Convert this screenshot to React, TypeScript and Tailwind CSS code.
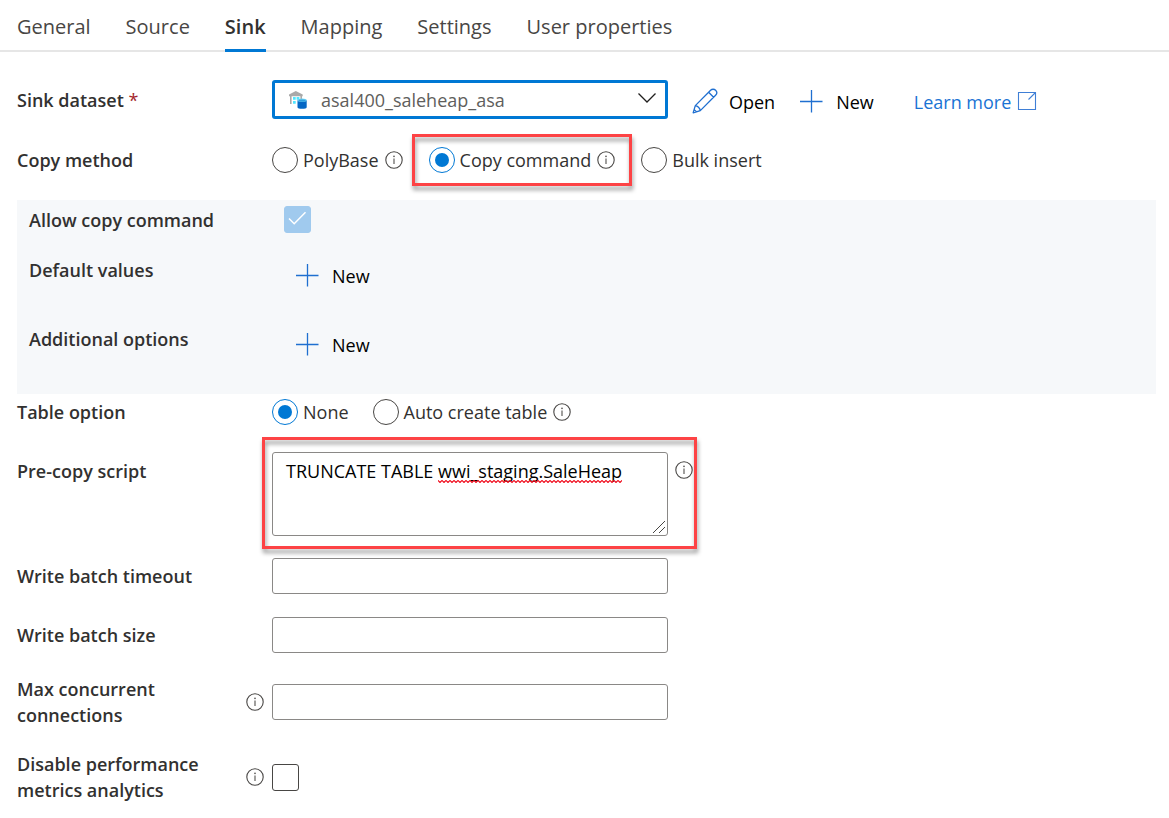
import { useState } from "react";
import type { ReactNode } from "react";

const TABS = ["General", "Source", "Sink", "Mapping", "Settings", "User properties"];

function InfoIcon({ label }: { label: string }) {
  return (
    <svg role="img" aria-label={label} className="size-[18px] shrink-0" viewBox="0 0 18 18" fill="none">
      <circle cx="9" cy="9" r="8.2" stroke="#484644" strokeWidth="1.1" />
      <path d="M9 7.6V13" stroke="#605e5c" strokeWidth="1.2" />
      <circle cx="9" cy="5.3" r="0.9" fill="#605e5c" />
    </svg>
  );
}

function PlusIcon() {
  return (
    <svg aria-hidden="true" className="mb-0.5 size-6 shrink-0" viewBox="0 0 24 24" fill="none">
      <path d="M12.5 1v22.5M1 12.5h22.5" stroke="#1f6fd0" strokeWidth="1.3" />
    </svg>
  );
}

function PencilIcon() {
  return (
    <svg aria-hidden="true" className="mb-0.5 size-[26px] shrink-0" viewBox="0 0 26 26" fill="none">
      <path
        d="M1.2 24.8 3.3 17.6 18.6 2.3C20 .9 22.2.9 23.6 2.3 25 3.7 25 5.9 23.6 7.3L8.3 22.6 1.2 24.8ZM16.6 4.3 21.600 9.300M3.3 17.6C5.5 17.9 8 20.2 8.3 22.6M2.2 21.6 4.4 23.8"
        stroke="#1f6fd0"
        strokeWidth="1.3"
        strokeLinejoin="round"
      />
    </svg>
  );
}

function ExternalIcon() {
  return (
    <svg aria-hidden="true" className="mb-0.5 size-5 shrink-0" viewBox="0 0 20 20" fill="none">
      <path d="M11.5 1.5h-10v17h17v-17ZM18.5 1.500 11.500 8.500" stroke="#3f7fd6" strokeWidth="1.1" />
    </svg>
  );
}

function WarehouseIcon() {
  return (
    <svg aria-hidden="true" className="size-5" viewBox="0 0 20 20">
      <path d="M1 6.2V4.6L7.8 1l6.9 3.6v1.6Z" fill="#a9a9a9" />
      <path d="M2 6h1.6v8H2ZM12.4 6H14v3h-1.6Z" fill="#a9a9a9" />
      <path d="M5 7h2.7v2.8H5ZM8.6 7h2.8v2.8H8.6ZM5 11h2.7v2.8H5Z" fill="#50e6ff" />
      <path d="M9.5 10.2v7c0 .9 2 1.6 4.6 1.6s4.6-.7 4.6-1.6v-7Z" fill="#0567c4" />
      <ellipse cx="14.1" cy="10.2" rx="4.6" ry="1.6" fill="#6fd3f2" />
      <ellipse cx="14.1" cy="10.6" rx="3.6" ry="1" fill="#2f9fe0" />
    </svg>
  );
}

function NewButton() {
  return (
    <button type="button" className="flex shrink-0 items-center gap-[13px]">
      <PlusIcon />
      New
    </button>
  );
}

function CheckBox({ id, disabled, defaultChecked }: { id: string; disabled?: boolean; defaultChecked?: boolean }) {
  return (
    <span className="grid size-[27px] shrink-0">
      <input
        id={id}
        type="checkbox"
        disabled={disabled}
        defaultChecked={defaultChecked}
        className="peer col-start-1 row-start-1 size-[27px] appearance-none rounded-[3px] border border-[#484644] bg-white checked:border-[#0078d4] checked:bg-[#0078d4] disabled:checked:border-[#a0caee] disabled:checked:bg-[#a0caee]"
      />
      <svg
        aria-hidden="true"
        viewBox="0 0 27 27"
        fill="none"
        className="pointer-events-none invisible col-start-1 row-start-1 size-[27px] peer-checked:visible"
      >
        <path d="M5 12.5 10.2 17.7 21.5 6.3" stroke="#fff" strokeWidth="1.5" />
      </svg>
    </span>
  );
}

function Highlight({ className }: { className: string }) {
  return (
    <span
      aria-hidden="true"
      className={`pointer-events-none absolute border-3 border-[#fd4345] drop-shadow-[1px_4px_2px_rgba(0,0,0,0.4)] ${className}`}
    />
  );
}

function Radio({
  name,
  label,
  checked,
  onSelect,
  info,
  highlighted,
}: {
  name: string;
  label: string;
  checked: boolean;
  onSelect: () => void;
  info?: boolean;
  highlighted?: boolean;
}) {
  return (
    <div className="relative flex items-center gap-1.5">
      <label className="flex items-center gap-[5px] text-[#323130]">
        <input
          type="radio"
          name={name}
          checked={checked}
          onChange={onSelect}
          className="grid size-[26px] shrink-0 appearance-none place-items-center rounded-full border border-[#484644] bg-white before:size-[14px] before:rounded-full checked:border-[#0078d4] checked:before:bg-[#0078d4]"
        />
        {label}
      </label>
      {info && <InfoIcon label={`About ${label}`} />}
      {highlighted && <Highlight className="-inset-x-[17px] -inset-y-[13px]" />}
    </div>
  );
}

function Row({
  label,
  htmlFor,
  info,
  align = "items-center",
  children,
}: {
  label: ReactNode;
  htmlFor?: string;
  info?: boolean;
  align?: string;
  children: ReactNode;
}) {
  return (
    <div className={`grid grid-cols-[255px_minmax(0,1fr)] ${align}`}>
      <div className="flex items-center justify-between pr-2">
        <label htmlFor={htmlFor} className="max-w-[200px] font-semibold text-[#323130]">
          {label}
        </label>
        {info && <InfoIcon label="More information" />}
      </div>
      <div className="flex items-center">{children}</div>
    </div>
  );
}

const inputClass = "h-9 w-full max-w-[396px] rounded-[3px] border border-[#8a8886] bg-white px-3 outline-none";

export default function App() {
  const [tab, setTab] = useState("Sink");
  const [method, setMethod] = useState("Copy command");
  const [option, setOption] = useState("None");

  return (
    <div className="min-h-screen bg-white font-['Open_Sans','Noto_Sans',sans-serif] text-[18px] leading-[26px] text-black">
      <nav role="tablist" className="flex gap-[35px] border-b-2 border-[#e6e6e6] px-[17px] text-xl">
        {TABS.map((t) => (
          <button
            key={t}
            type="button"
            role="tab"
            aria-selected={t === tab}
            onClick={() => setTab(t)}
            className={
              t === tab
                ? "-mb-0.5 h-[52px] border-b-3 border-[#0078d4] pt-1 font-semibold text-[#323130]"
                : "-mb-0.5 h-[52px] border-b-3 border-transparent pt-1 text-[#484644]"
            }
          >
            {t}
          </button>
        ))}
      </nav>

      <main className="pt-7 pr-[13px] pb-3 pl-[17px]">
        <Row htmlFor="dataset" label={<>Sink dataset <span className="font-normal text-[#a4262c]">*</span></>}>
          <div className="relative w-full max-w-[396px]">
            <select
              id="dataset"
              className="block h-[39px] w-full appearance-none rounded-[3px] border-3 border-[#0078d4] bg-white pr-10 pl-[46px] text-[#605e5c] outline-none"
            >
              <option>asal400_saleheap_asa</option>
            </select>
            <span className="pointer-events-none absolute inset-y-0 left-4 flex items-center">
              <WarehouseIcon />
            </span>
            <svg aria-hidden="true" viewBox="0 0 20 12" fill="none" className="pointer-events-none absolute top-3 right-[11px] h-3 w-5">
              <path d="M1.5 1.5 10 10l8.500-8.500" stroke="#201f1e" strokeWidth="1.3" />
            </svg>
          </div>
          <div className="ml-6 flex shrink-0 items-center gap-6 pt-1">
            <button type="button" className="flex items-center gap-[11px]">
              <PencilIcon />
              Open
            </button>
            <NewButton />
            <a href="#learn-more" className="ml-4 flex items-center gap-1.5 text-[#1a73d4]">
              Learn more
              <ExternalIcon />
            </a>
          </div>
        </Row>

        <div className="mt-7">
          <Row label="Copy method">
            <div role="radiogroup" aria-label="Copy method" className="flex gap-[26px]">
              {["PolyBase", "Copy command", "Bulk insert"].map((m) => (
                <Radio
                  key={m}
                  name="method"
                  label={m}
                  checked={method === m}
                  onSelect={() => setMethod(m)}
                  info={m !== "Bulk insert"}
                  highlighted={m === "Copy command"}
                />
              ))}
            </div>
          </Row>
        </div>

        <section className="mt-[27px] bg-[#f6f8fa] px-3 pt-1.5 pb-9">
          <Row label="Allow copy command" htmlFor="allow-copy">
            <CheckBox id="allow-copy" disabled defaultChecked />
          </Row>
          <div className="mt-6">
            <Row label="Default values" align="items-start">
              <div className="mt-1.5 ml-[11px]">
                <NewButton />
              </div>
            </Row>
          </div>
          <div className="mt-[37px]">
            <Row label="Additional options" align="items-start">
              <div className="mt-1.5 ml-[11px]">
                <NewButton />
              </div>
            </Row>
          </div>
        </section>

        <div className="mt-[5px]">
          <Row label="Table option">
            <div role="radiogroup" aria-label="Table option" className="flex gap-6">
              {["None", "Auto create table"].map((o) => (
                <Radio
                  key={o}
                  name="option"
                  label={o}
                  checked={option === o}
                  onSelect={() => setOption(o)}
                  info={o !== "None"}
                />
              ))}
            </div>
          </Row>
        </div>

        <div className="mt-[27px] grid grid-cols-[255px_minmax(0,1fr)] items-start">
          <label htmlFor="script" className="mt-1.5 font-semibold text-[#323130]">
            Pre-copy script
          </label>
          <div className="relative flex w-full max-w-[421px] items-start gap-[7px]">
            <div className="relative min-w-0 flex-1">
              <textarea
                id="script"
                spellCheck={false}
                defaultValue="TRUNCATE TABLE wwi_staging.SaleHeap"
                className="block h-[84px] w-full resize-none rounded-[3px] border border-[#8a8886] bg-white px-[13px] py-[5px] outline-none"
              />
              <svg aria-hidden="true" className="pointer-events-none absolute top-7 left-[166px] h-[3px] w-[184px]">
                <defs>
                  <pattern id="squiggle" width="4" height="3" patternUnits="userSpaceOnUse">
                    <path d="M-1 1.500 0 .5 2 2.500 4 .5 5 1.500" fill="none" stroke="#f01020" strokeWidth="1.2" />
                  </pattern>
                </defs>
                <rect width="100%" height="3" fill="url(#squiggle)" />
              </svg>
              <svg aria-hidden="true" viewBox="0 0 14 14" className="pointer-events-none absolute right-0.5 bottom-0.5 size-3.5">
                <path d="M1 13 13 1M7 13l6-6" stroke="#484644" strokeWidth="1" />
              </svg>
            </div>
            <span className="mt-[9px]">
              <InfoIcon label="About pre-copy script" />
            </span>
            <Highlight className="-top-[15px] -right-1 -bottom-[13px] -left-2.5" />
          </div>
        </div>

        <div className="mt-[22px] flex flex-col gap-[23px]">
          <Row label="Write batch timeout" htmlFor="timeout">
            <input id="timeout" type="text" className={inputClass} />
          </Row>
          <Row label="Write batch size" htmlFor="batch">
            <input id="batch" type="text" className={inputClass} />
          </Row>
          <Row label="Max concurrent connections" htmlFor="max" info>
            <input id="max" type="text" className={inputClass} />
          </Row>
          <Row label="Disable performance metrics analytics" htmlFor="metrics" info>
            <CheckBox id="metrics" />
          </Row>
        </div>
      </main>
    </div>
  );
}
